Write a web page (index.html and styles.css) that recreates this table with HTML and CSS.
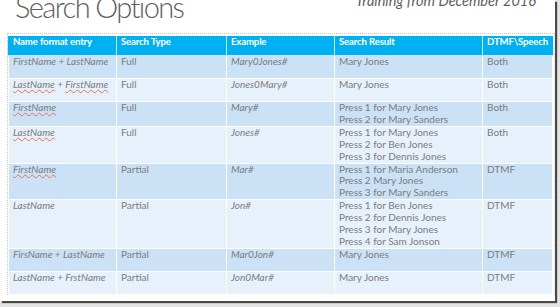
FILE: index.html
```html
<!DOCTYPE html>
<html>
<head>
<meta charset="utf-8">
<link rel="stylesheet" href="styles.css">
</head>
<body>
<div class="slide">
  <header class="top">
    <h1 class="title">Search Options</h1>
    <p class="subtitle">Training from December 2016</p>
  </header>
  <div class="frame">
    <table class="grid">
      <colgroup>
        <col class="c1"><col class="c2"><col class="c3"><col class="c4"><col class="c5">
      </colgroup>
      <thead>
        <tr><th>Name format entry</th><th>Search Type</th><th>Example</th><th>Search Result</th><th>DTMF\Speech</th></tr>
      </thead>
      <tbody>
        <tr class="dark"><td class="it">FirstName + LastName</td><td>Full</td><td class="it">Mary0Jones#</td><td>Mary Jones</td><td>Both</td></tr>
        <tr class="light"><td class="it"><span class="sp">LastName</span> + <span class="sp">FirstName</span></td><td>Full</td><td class="it">Jones0Mary#</td><td>Mary Jones</td><td>Both</td></tr>
        <tr class="dark"><td class="it"><span class="sp">FirstName</span></td><td>Full</td><td class="it">Mary#</td><td>Press 1 for Mary Jones<br>Press 2 for Mary Sanders</td><td>Both</td></tr>
        <tr class="light"><td class="it"><span class="sp">LastName</span></td><td>Full</td><td class="it">Jones#</td><td>Press 1 for Mary Jones<br>Press 2 for Ben Jones<br>Press 3 for Dennis Jones</td><td>Both</td></tr>
        <tr class="dark"><td class="it"><span class="sp">FirstName</span></td><td>Partial</td><td class="it">Mar#</td><td>Press 1 for Maria Anderson<br>Press 2 Mary Jones<br>Press 3 for Mary Sanders</td><td>DTMF</td></tr>
        <tr class="light"><td class="it">LastName</td><td>Partial</td><td class="it">Jon#</td><td>Press 1 for Ben Jones<br>Press 2 for Dennis Jones<br>Press 3 for Mary Jones<br>Press 4 for Sam Jonson</td><td>DTMF</td></tr>
        <tr class="dark"><td class="it">FirsName + LastName</td><td>Partial</td><td class="it">Mar0Jon#</td><td>Mary Jones</td><td>DTMF</td></tr>
        <tr class="light"><td class="it">LastName + FrstName</td><td>Partial</td><td class="it">Jon0Mar#</td><td>Mary Jones</td><td>DTMF</td></tr>
      </tbody>
    </table>
  </div>
</div>
</body>
</html>
```

FILE: styles.css
```css
html, body {
  margin: 0;
  padding: 0;
}
body {
  background: #e4e4e4;
  width: 560px;
  height: 307px;
  overflow: hidden;
  font-family: Lato, "Open Sans", sans-serif;
}
.slide {
  width: 555px;
  height: 301px;
  background: #ffffff;
  box-shadow: 2px 2px 1px #4a4a4a;
  overflow: hidden;
}
.top {
  display: flex;
  justify-content: space-between;
  align-items: flex-start;
  height: 33px;
}
.title {
  margin: -8px 0 0 15px;
  font-size: 29px;
  line-height: 30px;
  font-weight: 300;
  color: #5e5e5e;
  letter-spacing: -1.6px;
}
.subtitle {
  margin: -8px 19px 0 0;
  font-size: 14.5px;
  line-height: 17px;
  font-style: italic;
  font-weight: 400;
  color: #5e5e5e;
}
.frame {
  margin-left: 7px;
  width: 546px;
  border-top: 1px dotted #c4c4c4;
  border-left: 1px dotted #c4c4c4;
  border-right: 1px dotted #d4d4d4;
  padding-top: 2px;
}
.grid {
  border-collapse: collapse;
  table-layout: fixed;
  width: 544px;
  font-size: 10px;
  line-height: 11.9px;
}
.c1 { width: 108px; }
.c2 { width: 110px; }
.c3 { width: 108px; }
.c4 { width: 148px; }
.c5 { width: 70px; }
th {
  background: #00b0f0;
  color: #ffffff;
  font-size: 9.6px;
  font-weight: 700;
  letter-spacing: -0.15px;
  text-align: left;
  vertical-align: top;
  padding: 0 4px;
  height: 19px;
  border: 1px solid #bfe9fb;
  border-top: none;
  white-space: nowrap;
}
th:first-child { border-left-color: #00b0f0; }
th:last-child { border-right-color: #00b0f0; }
td {
  color: #7c7c7c;
  vertical-align: top;
  padding: 0 4px;
  height: 22px;
  border: 1px solid #ffffff;
  white-space: nowrap;
}
.dark td { background: #cbe1f6; }
.light td { background: #e7f1fb; }
.it { font-style: italic; }
.sp {
  text-decoration: underline wavy #e8705e;
  text-decoration-thickness: 1px;
  text-underline-offset: 1px;
}
```
